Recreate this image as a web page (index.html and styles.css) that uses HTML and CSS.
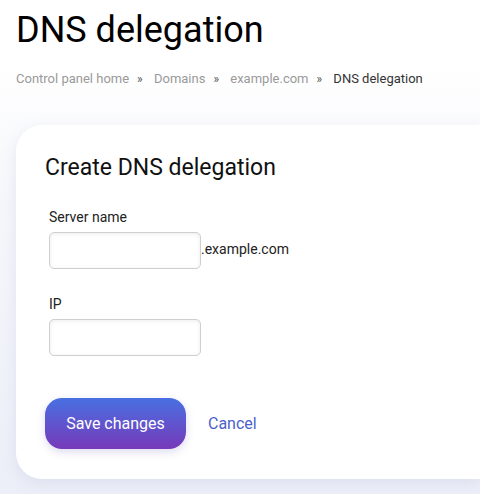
FILE: index.html
```html
<!DOCTYPE html>
<html>
<head>
<meta charset="utf-8">
<link rel="stylesheet" href="styles.css">
</head>
<body>
<div class="page">
  <h1 class="title">DNS delegation</h1>
  <nav class="crumbs">
    <a href="#">Control panel home</a><span class="sep">»</span>
    <a href="#">Domains</a><span class="sep">»</span>
    <a href="#">example.com</a><span class="sep">»</span>
    <span class="current">DNS delegation</span>
  </nav>
  <section class="card">
    <h2 class="card-title">Create DNS delegation</h2>
    <form class="form">
      <div class="field">
        <label class="label">Server name</label>
        <div class="row"><input class="input" type="text"><span class="suffix">.example.com</span></div>
      </div>
      <div class="field">
        <label class="label">IP</label>
        <div class="row"><input class="input" type="text"></div>
      </div>
      <div class="actions">
        <button class="btn" type="button">Save changes</button>
        <a class="cancel" href="#">Cancel</a>
      </div>
    </form>
  </section>
</div>
</body>
</html>
```
FILE: styles.css
```css
html, body { margin: 0; padding: 0; }
body {
  font-family: Roboto, "Liberation Sans", sans-serif;
  background: linear-gradient(#ffffff 0px, #ffffff 60px, #f6f7fb 200px, #eceff8 494px);
  min-height: 494px;
  overflow: hidden;
}
.page { padding: 0 0 0 16px; }
.title {
  margin: 0;
  padding-top: 7px;
  font-size: 36px;
  font-weight: 400;
  line-height: 46px;
  color: #000;
}
.crumbs {
  margin-top: 18px;
  font-size: 13px;
  line-height: 16px;
  color: #999;
}
.crumbs a { color: #9a9a9a; text-decoration: none; }
.crumbs .sep { margin: 0 8px; color: #555; font-size: 12px; }
.crumbs .current { color: #333; }
.card {
  margin-top: 38px;
  background: #fff;
  border-radius: 26px 0 0 26px;
  box-shadow: 0 4px 14px rgba(170, 180, 210, 0.25);
  padding: 28px 0 30px 29px;
  height: 296px;
}
.card-title {
  margin: 0;
  font-size: 23px;
  font-weight: 400;
  line-height: 30px;
  color: #111;
}
.form { margin-top: 25px; padding-left: 4px; }
.field { margin-bottom: 26px; }
.label {
  display: block;
  font-size: 14px;
  line-height: 18px;
  color: #222;
  margin-bottom: 6px;
}
.row { display: flex; align-items: center; }
.input {
  box-sizing: border-box;
  width: 152px;
  height: 37px;
  border: 1px solid #cfcfcf;
  border-radius: 5px;
  box-shadow: inset 0 1px 4px rgba(0,0,0,0.08);
  padding: 0 8px;
  font: inherit;
}
.suffix { font-size: 14px; color: #222; margin-top: -4px; }
.actions {
  display: flex;
  align-items: center;
  margin-top: 42px;
  margin-left: -4px;
  gap: 22px;
}
.btn {
  width: 141px;
  height: 51px;
  border: none;
  border-radius: 17px;
  background: linear-gradient(#4870e2, #7739b9);
  color: #fff;
  font-family: Roboto, "Liberation Sans", sans-serif;
  font-size: 16px;
  box-shadow: 0 3px 8px rgba(80, 80, 180, 0.2);
}
.cancel { color: #4d5fc9; font-size: 16px; text-decoration: none; }
```
